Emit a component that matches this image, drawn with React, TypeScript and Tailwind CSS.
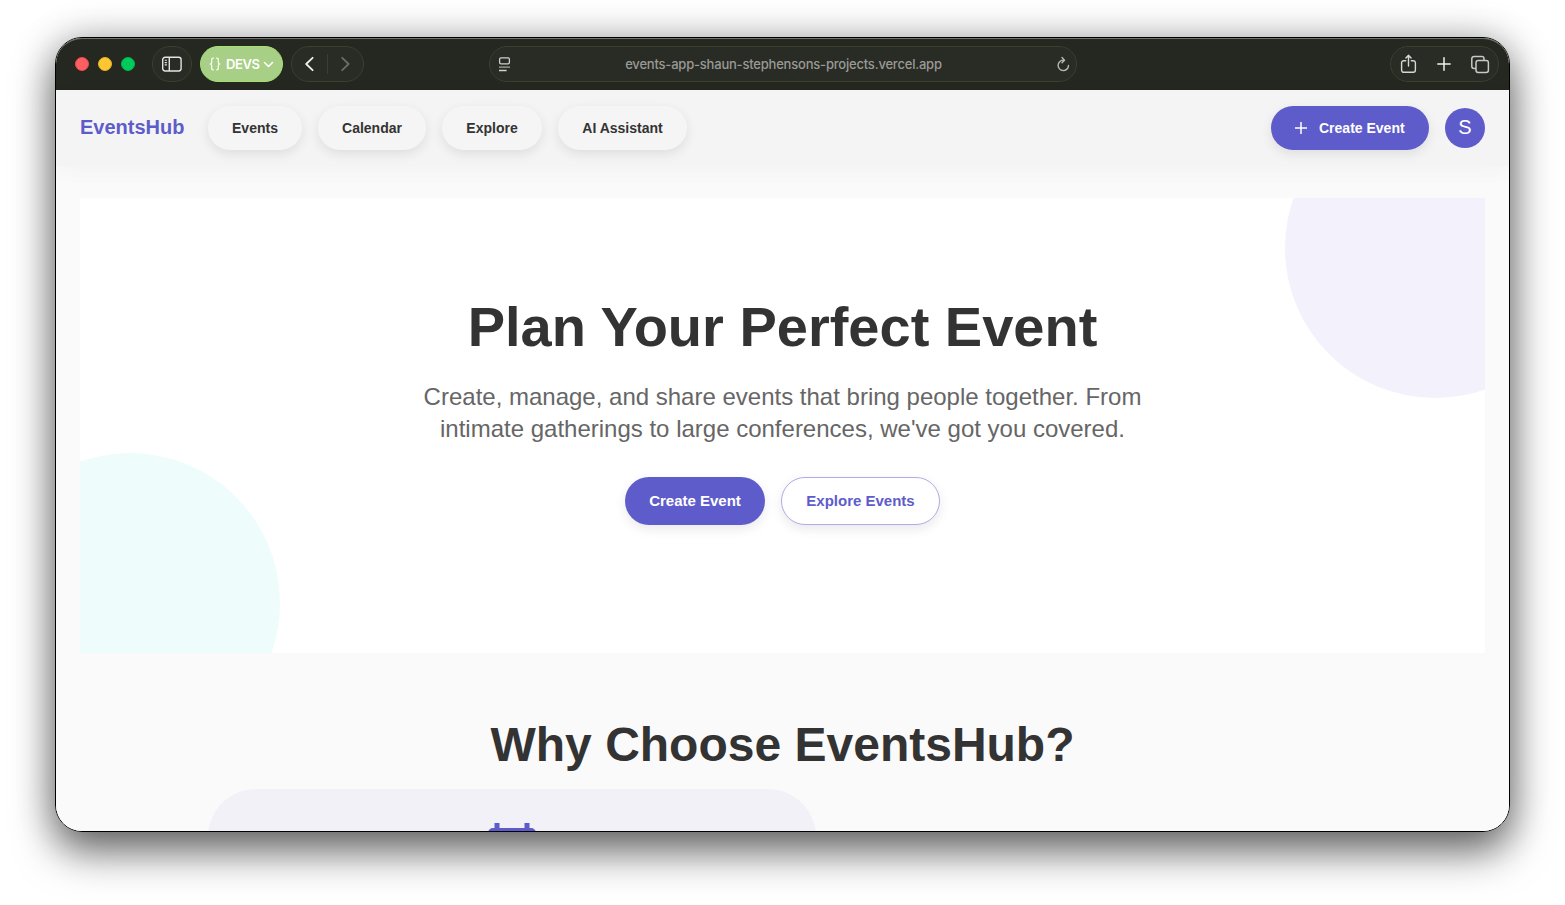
import React from "react";

const navItems = [
  { label: "Events", width: "w-[94px]" },
  { label: "Calendar", width: "w-[108px]" },
  { label: "Explore", width: "w-[100px]" },
  { label: "AI Assistant", width: "w-[129px]" },
];

const softShadow = "shadow-[0_4px_12px_rgba(0,0,0,0.09)]";
const pill = "rounded-full border border-[#3d3f2f] bg-[#292b25]";

function SidebarIcon() {
  return (
    <svg width="20" height="16" viewBox="0 0 20 16" fill="none" stroke="#e4e5e2" strokeWidth="1.4">
      <rect x="0.7" y="1.2" width="18.4" height="13.8" rx="2.4" />
      <path d="M7.3 1.2v13.8" />
      <path d="M2.7 4.3h2.2M2.7 6.6h2.2M2.7 8.9h2.2" strokeWidth="1.1" />
    </svg>
  );
}

function BrowserBar() {
  return (
    <div className="grid h-[52px] shrink-0 grid-cols-[433px_588px_1fr] items-center bg-[#252721] font-[Inter,sans-serif]">
      <div className="flex items-center pl-[19px]">
        <div className="flex gap-[9px]">
          <span className="size-3.5 rounded-full border border-[#f0474f] bg-[#ff5f62]" />
          <span className="size-3.5 rounded-full border border-[#e9b21e] bg-[#fdc734]" />
          <span className="size-3.5 rounded-full border border-[#07b44d] bg-[#00ca5b]" />
        </div>
        <div className={`ml-[17px] flex h-9 w-10 items-center justify-center ${pill}`}>
          <SidebarIcon />
        </div>
        <div className="ml-2 flex h-9 w-[83px] items-center rounded-full border border-[#a9e072] bg-[#a7cf85] pl-2 text-white">
          <svg width="12" height="14" viewBox="0 0 12 14" fill="none" stroke="currentColor" strokeWidth="1.2" strokeLinecap="round" strokeLinejoin="round">
            <path d="M4.3 1.2H4C3 1.2 2.7 1.7 2.7 2.6v2.8C2.7 6.3 2.2 6.9 1 7c1.2.1 1.7.7 1.7 1.6v2.8c0 .9.3 1.4 1.3 1.4h.3M7.7 1.2H8c1 0 1.3.5 1.3 1.400v2.800c0 .9.5 1.500 1.700 1.600-1.200.1-1.700.7-1.700 1.600v2.800c0 .9-.3 1.400-1.300 1.400h-.3" />
          </svg>
          <span className="ml-[5px] w-[35px] text-[13px] leading-[18px] font-semibold tracking-[-0.4px] whitespace-nowrap">DEVS</span>
          <svg className="ml-[2px]" width="11" height="8" viewBox="0 0 11 8" fill="none" stroke="currentColor" strokeWidth="1.6" strokeLinecap="round" strokeLinejoin="round">
            <path d="M1.5 2.5l4 4 4-4" />
          </svg>
        </div>
        <div className={`ml-2 flex h-9 w-[73px] items-center ${pill}`}>
          <span className="flex w-[34px] justify-center">
            <svg width="9" height="16" viewBox="0 0 9 16" fill="none" stroke="#eeeeec" strokeWidth="1.8" strokeLinecap="round" strokeLinejoin="round">
              <path d="M7.6 1.8L1.2 8l6.4 6.2" />
            </svg>
          </span>
          <span className="ml-px h-5 w-px bg-[#3c3e36]" />
          <span className="flex w-[34px] justify-center">
            <svg width="9" height="16" viewBox="0 0 9 16" fill="none" stroke="#6b6d67" strokeWidth="1.8" strokeLinecap="round" strokeLinejoin="round">
              <path d="M1.2 1.8L7.6 8l-6.4 6.2" />
            </svg>
          </span>
        </div>
      </div>
      <div className={`flex h-9 items-center justify-between pr-[6px] pl-[8px] ${pill}`}>
        <svg width="13" height="16" viewBox="0 0 13 16" fill="none" stroke="#d0d1ce" strokeWidth="1.3">
          <rect x="1.6" y="1.9" width="9.8" height="6" rx="1.4" />
          <path d="M1 11.2h11" stroke="#a7a8a3" />
          <path d="M1 14.5h7.600" />
        </svg>
        <span className="text-[13px] leading-5 font-medium tracking-[-0.205px] whitespace-nowrap text-[#999a95]">events-app-shaun-stephensons-projects.vercel.app</span>
        <svg width="14" height="16" viewBox="0 0 14 16" fill="none" stroke="#b6b7b3" strokeWidth="1.4" strokeLinecap="round" strokeLinejoin="round">
          <path d="M7.8 4.2A5.2 5.2 0 1 0 12.500 9.400M6 1.600l2.500 2.600L6 6.800" />
        </svg>
      </div>
      <div className="flex justify-end pr-[10px]">
        <div className={`flex h-9 w-[109px] items-center justify-between pr-[8px] pl-[9px] ${pill}`}>
          <svg width="17" height="20" viewBox="0 0 17 20" fill="none" stroke="#d6d7d4" strokeWidth="1.4" strokeLinecap="round" strokeLinejoin="round">
            <path d="M5.7 6.7H3.8a2.2 2.2 0 0 0-2.2 2.2v7.2a2.2 2.2 0 0 0 2.200 2.200h9.400a2.200 2.200 0 0 0 2.200-2.200V8.900a2.200 2.200 0 0 0-2.200-2.200h-1.900M8.500 12V1.500M5.900 3.900l2.600-2.600 2.600 2.600" />
          </svg>
          <svg width="14" height="14" viewBox="0 0 14 14" stroke="#f0f0ee" strokeWidth="1.5" strokeLinecap="round">
            <path d="M7 .8v12.4M.8 7h12.400" />
          </svg>
          <svg width="20" height="20" viewBox="0 0 20 20" fill="none" stroke="#c8c9c6" strokeWidth="1.5">
            <rect x="6" y="6.5" width="12.4" height="12" rx="2.2" />
            <path d="M6 14.500H4A2.200 2.200 0 0 1 1.800 12.300V4.700A2.200 2.200 0 0 1 4 2.500h7.800A2.200 2.200 0 0 1 14 4.700V6.500" />
          </svg>
        </div>
      </div>
    </div>
  );
}

function SiteHeader() {
  return (
    <header className="relative z-10 flex h-[76px] shrink-0 items-center bg-[#f4f4f4] px-6 shadow-[0_4px_20px_rgba(0,0,0,0.035)]">
      <div className="w-32 pb-0.5 text-xl leading-6 font-bold text-[#5e5ccb]">EventsHub</div>
      <nav className="flex gap-4 text-[#333]">
        {navItems.map((item) => (
          <a key={item.label} className={`flex h-11 items-center justify-center rounded-full bg-[#f5f5f5] text-sm font-bold whitespace-nowrap ${item.width} ${softShadow}`}>
            {item.label}
          </a>
        ))}
      </nav>
      <div className="ml-auto flex items-center gap-4 text-white">
        <button className={`flex h-11 w-[158px] items-center rounded-full bg-[#5e5ccb] pl-6 text-sm font-bold ${softShadow}`}>
          <svg width="12" height="12" viewBox="0 0 12 12" stroke="currentColor" strokeWidth="1.5">
            <path d="M6 0v12M0 6h12" />
          </svg>
          <span className="ml-3 whitespace-nowrap">Create Event</span>
        </button>
        <span className="flex size-10 items-center justify-center rounded-full bg-[#5e5ccb] pb-0.5 text-xl">S</span>
      </div>
    </header>
  );
}

function Hero() {
  return (
    <section className="relative mx-6 mt-8 flex h-[455px] shrink-0 flex-col items-center overflow-hidden bg-white">
      <span className="absolute -top-[100px] -right-[100px] size-[300px] rounded-full bg-[#f3f1fb]" />
      <span className="absolute -bottom-[100px] -left-[100px] size-[300px] rounded-full bg-[#eefcfc]" />
      <h1 className="mt-[95px] text-[56px] leading-[67px] font-bold whitespace-nowrap text-[#333]">Plan Your Perfect Event</h1>
      <p className="mt-[21px] text-center text-2xl leading-8 whitespace-nowrap text-[#666]">
        Create, manage, and share events that bring people together. From
        <br />
        intimate gatherings to large conferences, we've got you covered.
      </p>
      <div className="mt-8 flex gap-4 text-[15px] font-bold">
        <button className={`h-12 w-[140px] rounded-full bg-[#5e5ccb] text-white ${softShadow}`}>Create Event</button>
        <button className={`h-12 w-[159px] rounded-full border border-[#aeade5] bg-white text-[#5e5ccb] ${softShadow}`}>Explore Events</button>
      </div>
    </section>
  );
}

function Features() {
  return (
    <section className="flex shrink-0 flex-col">
      <h2 className="mt-16 text-center text-[48px] leading-[56px] font-bold text-[#333]">Why Choose EventsHub?</h2>
      <div className="mt-4 ml-[152px] flex h-60 w-[608px] justify-center rounded-[48px] bg-[#f3f1f8] pt-8">
        <svg width="48" height="54" viewBox="0 0 48 54" fill="#5e5ccb">
          <path d="M6.5 2h5v5h25V2h5v5H43a5 5 0 0 1 5 5v37a5 5 0 0 1-5 5H5a5 5 0 0 1-5-5V12a5 5 0 0 1 5-5h1.500z" />
        </svg>
      </div>
    </section>
  );
}

export default function App() {
  return (
    <div className="h-[905px] w-[1565px] overflow-hidden bg-white px-[55px] pt-[37px] font-['Liberation_Sans',Arial,sans-serif]">
      <div className="h-[795px] w-[1455px] rounded-[27px] border border-black shadow-[0_20px_42px_rgba(0,0,0,0.55),0_0_38px_rgba(0,0,0,0.24)]">
        <div className="relative flex h-full flex-col overflow-hidden rounded-[26px] bg-[#fafafa]">
          <BrowserBar />
          <SiteHeader />
          <Hero />
          <Features />
          <div className="pointer-events-none absolute inset-x-0 top-0 z-20 h-[52px] rounded-t-[26px] border-t border-[#72756b]" />
        </div>
      </div>
    </div>
  );
}
